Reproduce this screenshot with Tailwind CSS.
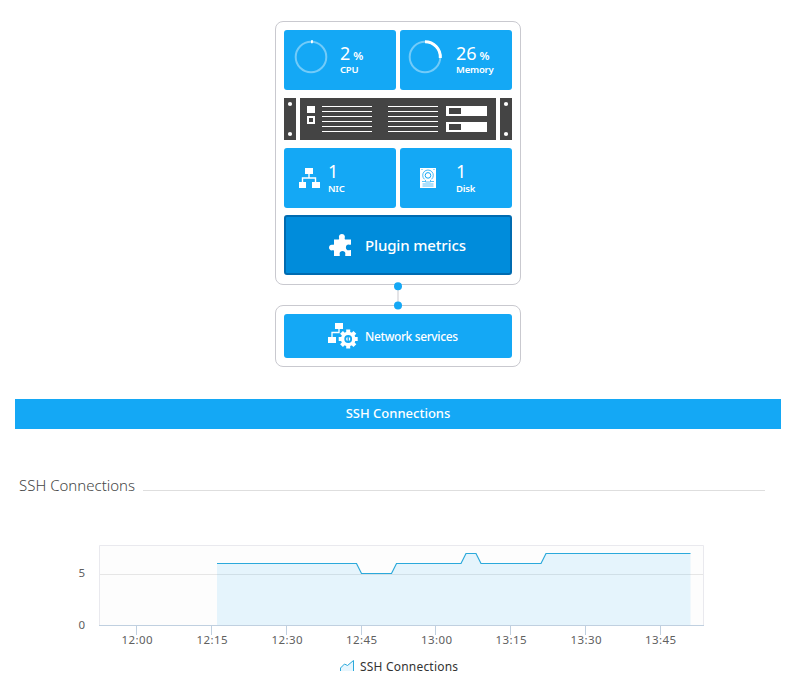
<!DOCTYPE html>
<html lang="en">
<head>
<meta charset="utf-8">
<title>SSH Connections</title>
<script src="https://cdn.jsdelivr.net/npm/@tailwindcss/browser@4"></script>
</head>
<body class="bg-white w-[792px] h-[694px] overflow-hidden font-['Noto_Sans','Open_Sans',sans-serif]">
<main class="flex flex-col pt-[21px]">
  <section class="flex flex-col items-center pl-1">
    <div class="w-[246px] h-[264px] rounded-lg border border-[#c9c9cf] p-2 flex flex-col">
      <div class="flex gap-1 h-[60px] text-white">
        <div class="w-28 rounded-[3px] bg-[#14a8f5] flex">
          <svg class="w-14 h-[60px] shrink-0" viewBox="0 0 56 60" fill="none"><circle cx="27" cy="27" r="15.3" stroke="#72cbf9" stroke-width="2"/><path d="M27 11.7a15.3 15.3 0 0 1 1.9.1" stroke="#fff" stroke-width="3"/></svg>
          <div class="pt-[12px] font-medium"><div class="h-[22px] text-[18px] leading-[22px] font-normal whitespace-nowrap flex items-baseline">2<span class="text-[11.5px] leading-[14px] font-semibold ml-[3px]">%</span></div><div class="text-[9.5px] leading-[11px] font-semibold tracking-[-0.2px]">CPU</div></div>
        </div>
        <div class="w-28 rounded-[3px] bg-[#14a8f5] flex">
          <svg class="w-14 h-[60px] shrink-0" viewBox="0 0 56 60" fill="none"><circle cx="25" cy="27" r="15.3" stroke="#72cbf9" stroke-width="2"/><path d="M25 11.7A15.3 15.3 0 0 1 40.3 28" stroke="#fff" stroke-width="3"/></svg>
          <div class="pt-[12px] font-medium"><div class="h-[22px] text-[18px] leading-[22px] font-normal whitespace-nowrap flex items-baseline">26<span class="text-[11.5px] leading-[14px] font-semibold ml-[3px]">%</span></div><div class="text-[9.5px] leading-[11px] font-semibold tracking-[-0.2px]">Memory</div></div>
        </div>
      </div>
      <svg class="w-[228px] h-[42px] mt-2 shrink-0" viewBox="0 0 228 42" shape-rendering="crispEdges">
        <path fill="#444" d="M0 0h12v42H0zM16 0h196v42H16zM216 0h12v42h-12z"/>
        <g fill="#fff" shape-rendering="auto"><circle cx="6" cy="6" r="2.1"/><circle cx="6" cy="36" r="2.1"/><circle cx="222" cy="6" r="2.1"/><circle cx="222" cy="36" r="2.1"/></g>
        <path fill="#fff" d="M23 8h8v7h-8zM23 18h8v8h-8zM162 8h41v10h-41zM162 24h41v10h-41z"/>
        <path fill="#444" d="M25 20h4v4h-4zM165 10h12v6h-12zM165 26h12v6h-12z"/>
        <path stroke="#fff" d="M38 8.500h50M38 13.500h50M38 18.500h50M38 23.500h50M38 28.500h50M38 33.500h50M104 8.500h50M104 13.500h50M104 18.500h50M104 23.500h50M104 28.500h50M104 33.500h50"/>
      </svg>
      <div class="flex gap-1 h-[60px] mt-2 text-white">
        <div class="w-28 rounded-[3px] bg-[#14a8f5] flex">
          <svg class="w-11 h-[60px] shrink-0" viewBox="0 0 44 60"><path fill="#fff" d="M21 20h8v6h-8zM15 34h7v6h-7zM28 34h8v6h-8z"/><path d="M25 26v4M18.500 34v-4h13v4" fill="none" stroke="#fff" stroke-width="1.4"/></svg>
          <div class="pt-[12px]"><div class="h-[23px] text-[18px] leading-[22px]">1</div><div class="text-[9.5px] leading-[11px] font-semibold tracking-[-0.2px]">NIC</div></div>
        </div>
        <div class="w-28 rounded-[3px] bg-[#14a8f5] flex">
          <svg class="w-14 h-[60px] shrink-0" viewBox="0 0 56 60" fill="none" stroke="#14a8f5"><path d="M20 20h16v20H20z" fill="#fff" stroke="none"/><path d="M24.500 31.300a5.300 5.300 0 1 1 7 0" stroke-width=".8"/><circle cx="28" cy="27.400" r="2.800" stroke-width="1"/><path d="M22 33.500h3.300M31 33.500h3M25.500 32v2h5v-2M22.500 36h11M22.500 38h11" stroke-width=".7"/><path d="M21.500 21.500h1M33.500 21.500h1" stroke-width=".8"/></svg>
          <div class="pt-[12px]"><div class="h-[23px] text-[18px] leading-[22px]">1</div><div class="text-[9.5px] leading-[11px] font-semibold tracking-[-0.2px]">Disk</div></div>
        </div>
      </div>
      <div class="h-[60px] mt-[7px] shrink-0 rounded-[3px] bg-[#008cdb] border-2 border-[#006bb0] flex items-center text-white">
        <svg class="w-[23px] h-[23px] ml-[43px]" viewBox="0 0 23 23" fill="#fff"><path d="M5 5.500h4.800C10.500 4.500 9.900 4 9.900 2.800 9.900 1.200 11.200 0 12.900 0s3 1.200 3 2.800c0 1.200-.6 1.700.1 2.700H22v5c-.8.600-1.500 0-2.500 0-1.500 0-2.600 1.300-2.600 2.900s1.100 2.900 2.600 2.900c1 0 1.700-.600 2.500 0V22h-5.500c-.7-.800-.1-1.500-.1-2.300 0-1.600-1.300-2.700-2.900-2.700s-2.900 1.100-2.900 2.700c0 .8.600 1.500-.1 2.300H5v-5.300c-.8-.700-1.400-.2-2.300-.2C1.200 16.500 0 15.200 0 13.600s1.200-2.900 2.700-2.900c.9 0 1.500.5 2.300-.2z"/></svg>
        <span class="ml-[13px] text-[15px] leading-5 font-medium tracking-[-0.15px]">Plugin metrics</span>
      </div>
    </div>
    <div class="relative z-10 w-2 h-5"><svg class="absolute left-0 -top-[4px] w-2 h-[30px]" viewBox="0 0 8 30"><path d="M4 5v20" stroke="#c9c9cf"/><circle cx="4" cy="5.300" r="4" fill="#14a8f5"/><circle cx="4" cy="24.600" r="4" fill="#14a8f5"/></svg></div>
    <div class="w-[246px] h-[62px] rounded-lg border border-[#c9c9cf] p-2">
      <div class="h-11 rounded-[3px] bg-[#14a8f5] flex items-center text-white">
        <svg class="w-[30px] h-[26px] ml-11" viewBox="0 0 30 26"><path fill="#fff" d="M7 0h8v6H7zM0 14h8v6H0z"/><path d="M11 6v3.500H4V14" fill="none" stroke="#fff" stroke-width="1.300"/><g transform="translate(20.200 16)"><path d="M0-9.500V9.500M-9.500 0h19M-6.700-6.700 6.700 6.700M-6.700 6.700 6.700-6.700" stroke="#fff" stroke-width="4"/><circle r="7.300" fill="#fff"/><circle r="3" fill="none" stroke="#14a8f5" stroke-width="1.800"/><path d="M0-2v4" stroke="#14a8f5" stroke-width="1.300"/></g></svg>
        <span class="ml-[7px] mt-[2px] text-[12px] leading-4 font-medium tracking-[-0.38px]">Network services</span>
      </div>
    </div>
  </section>
  <div class="mt-8 ml-[15px] w-[766px] h-[30px] bg-[#14a8f5] text-white text-center text-[13px] leading-[28px] font-medium">SSH Connections</div>
  <div class="mt-[46px] ml-[19px] h-5 w-[746px] flex">
    <h2 class="w-[124px] text-[15px] leading-[20px] font-light text-[#454646]">SSH Connections</h2>
    <div class="h-px grow mt-[15px] bg-[#dedede]"></div>
  </div>
  <svg class="w-[792px] h-[199px] shrink-0" viewBox="0 495 792 199" font-size="11.5" fill="#606060">
    <path d="M99.500 545.500h604v80h-604z" fill="#fdfdfd" stroke="#e9e9ee"/>
    <path d="M100 574.500h603" stroke="#e6e6e6"/>
    <path d="M217 625V563.500H356.500L361.500 573.500H391.500L396.500 563.500H461L466 553.500H476L481 563.500H541L546 553.500H690.500V625z" fill="#14a8f5" fill-opacity=".1"/>
    <path d="M217 563.500H356.500L361.500 573.500H391.500L396.500 563.500H461L466 553.500H476L481 563.500H541L546 553.500H690.500" fill="none" stroke="#2ba9db" stroke-width="1.200"/>
    <path d="M99 625.500h605M136.500 625v10M211.500 625v10M286.500 625v10M361.500 625v10M435.500 625v10M510.500 625v10M585.500 625v10M660.500 625v10" fill="none" stroke="#c0d0e0"/>
    <g text-anchor="end"><text x="85" y="577">5</text><text x="85" y="629">0</text></g>
    <g><text x="121.500" y="644" textLength="31">12:00</text><text x="196.500" y="644" textLength="31">12:15</text><text x="271.500" y="644" textLength="31">12:30</text><text x="346" y="644" textLength="31">12:45</text><text x="421" y="644" textLength="31">13:00</text><text x="495.500" y="644" textLength="31">13:15</text><text x="570.500" y="644" textLength="31">13:30</text><text x="645" y="644" textLength="31">13:45</text></g>
    <path d="M340.500 671v-4l4-3 3 1 6-4.500V671z" fill="#14a8f5" fill-opacity=".1"/>
    <path d="M340.500 671v-3l4-4 3 1.500 6-5V671" fill="none" stroke="#2ba9db"/>
    <text x="360" y="671" font-size="12" fill="#333" textLength="98">SSH Connections</text>
  </svg>
</main>
</body>
</html>
